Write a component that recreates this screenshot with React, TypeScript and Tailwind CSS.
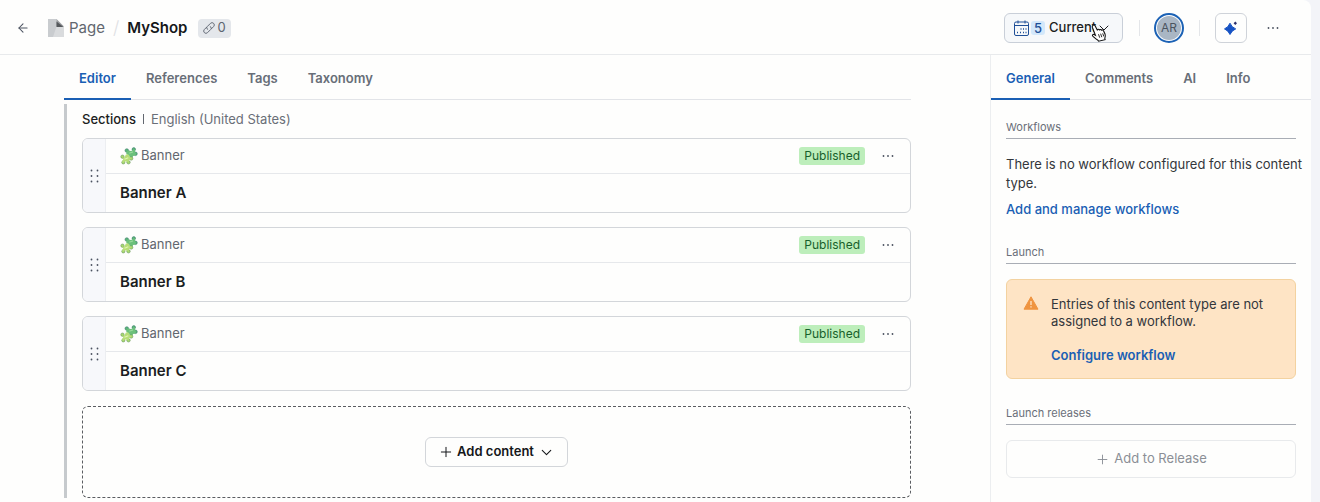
import { ArrowLeft, ChevronDown, Plus } from "lucide-react";

const banners = ["Banner A", "Banner B", "Banner C"];

function PageIcon() {
  return (
    <svg width="17" height="18" viewBox="0 0 17 18" aria-hidden="true">
      <path d="M0 0h8.500v7.500H16V18H0z" fill="#d9dbdd" />
      <path d="M0 0h8.500v7.500L5 18H0z" fill="#c9cccf" />
      <path d="M8.500 0L16 7.500H8.500z" fill="#9a9da0" />
      <path d="M8.500 2.500L15.500 8H8.500z" fill="#55595c" />
    </svg>
  );
}

function LinkIcon() {
  return (
    <svg width="12" height="12" viewBox="0 0 14 14" fill="none" stroke="#5d6571" strokeWidth="1.1" strokeLinecap="round" aria-hidden="true">
      <path d="M5.600 8.600L4.800 8a2 2 0 0 1 .2-2.700L8.700 1.600a2.500 2.500 0 0 1 3.700 3.700L9.800 7.900" />
      <path d="M8.400 5.400l.8.6a2 2 0 0 1-.2 2.700L5.300 12.400a2.500 2.500 0 0 1-3.700-3.700l2.600-2.600" />
    </svg>
  );
}

function CalendarIcon() {
  return (
    <svg width="15" height="16" viewBox="0 0 15 16" fill="none" stroke="#1f4f97" aria-hidden="true">
      <rect x="0.5" y="2" width="14" height="13.500" rx="1.500" />
      <path d="M0.500 5.500h14M4 0.500v3M11 0.500v3" />
      <path d="M6.500 9h1M9 9h1M11.500 9h1M3 12.500h1M6 12.500h1M9 12.500h1M11.500 12.500h1" strokeWidth="1.300" />
    </svg>
  );
}

function SparkIcon() {
  return (
    <svg width="14" height="14" viewBox="0 0 14 14" fill="#1753c4" aria-hidden="true">
      <path d="M6 2.200Q7.600 6.300 11.700 7.900Q7.600 9.500 6 13.500Q4.400 9.500 0.500 7.900Q4.400 6.300 6 2.200z" stroke="#1753c4" strokeWidth="1" strokeLinejoin="round" />
      <path d="M11.300 0.500L13 2.200L11.300 3.900L9.600 2.200z" fill="#2a2f6b" />
    </svg>
  );
}

function MoreIcon() {
  return (
    <svg width="12" height="4" viewBox="0 0 12 4" fill="#4b5260" aria-hidden="true">
      <circle cx="1.500" cy="2" r="0.900" />
      <circle cx="6" cy="2" r="0.900" />
      <circle cx="10.500" cy="2" r="0.900" />
    </svg>
  );
}

function GripIcon() {
  return (
    <svg width="9" height="14" viewBox="0 0 9 14" fill="#4b5260" aria-hidden="true">
      {[1.5, 7, 12.5].map((y) => (
        <g key={y}>
          <circle cx="1.500" cy={y} r="0.900" />
          <circle cx="7.500" cy={y} r="0.900" />
        </g>
      ))}
    </svg>
  );
}

function PuzzleIcon() {
  return (
    <svg width="18" height="18" viewBox="0 0 18 18" aria-hidden="true">
      <g fill="#5cb57a" stroke="#2f7363" strokeWidth="0.500">
        <circle cx="6.800" cy="3.500" r="1.800" />
        <circle cx="13.800" cy="2.300" r="1.700" />
        <circle cx="15.500" cy="6.800" r="1.800" />
      </g>
      <path d="M6.500 4.600l2.600-1.200 1.500.6 2-.4 1.200-1.600 1.500 1.600-.4 1.700 1 1.200-.7 1.900-2 .6-1 1.700-2.500-.8-1.800-2-1.600-1z" fill="#6cc07b" />
      <path d="M9.300 6.300l3.700-1.400" stroke="#98d99a" strokeWidth="1.200" />
      <g fill="#a9d86e" stroke="#5c8d5c" strokeWidth="0.500">
        <circle cx="2.500" cy="9.700" r="1.700" />
        <circle cx="11.200" cy="11.500" r="1.700" />
        <circle cx="8.500" cy="15.300" r="1.700" />
        <circle cx="3.300" cy="15.400" r="1.600" />
      </g>
      <path d="M2.300 10.900l2.400-.7 1-2.400 1.800-.6 1.700.9.200 1.700 2.200 1.100-1.200 1.700-1.500.6-.3 2.200-2.200-.8-1.500-.2-2 1.400-.9-1.700 1.300-1.700z" fill="#b7de78" />
      <path d="M4.500 12.300l3.800-1.500" stroke="#e3f3b3" strokeWidth="1.200" />
    </svg>
  );
}

function WarningIcon() {
  return (
    <svg width="16" height="14" viewBox="0 0 16 14" aria-hidden="true">
      <path d="M8 .8L15 13.200H1z" fill="#ef9440" stroke="#ef9440" strokeLinejoin="round" />
      <path d="M8 5v4M8 10.300v1.300" stroke="#fde5c8" strokeWidth="1.300" />
    </svg>
  );
}

function HandCursor() {
  return (
    <svg className="absolute top-[11px] right-4" width="16" height="18" viewBox="0 0 16 18" aria-hidden="true">
      <path
        d="M2 1.200c.9-.6 1.800-.1 2.200.7l2 4c.5-.9 1.700-.9 2.200 0 .6-.7 1.700-.6 2.100.3.700-.6 1.700-.3 2 .5l1.600 3.600c.5 1.500.2 2.900-.3 4l.3 1.400-6.500 1.500-1-1.200c-2-.9-3.500-2.700-4.800-3.800-.9-.9.1-2.200 1.300-1.700l1.300.8-3-7.800c-.3-.9-.1-1.800.6-2.300z"
        fill="#fff"
        stroke="#111"
        strokeWidth="1.100"
      />
      <path d="M7.500 10.200l1.200 3.500M9.600 9.700l1.200 3.500M11.700 9.300l1.100 3.200" stroke="#111" strokeWidth="0.900" />
    </svg>
  );
}

function Tabs({ items }: { items: string[] }) {
  return (
    <div role="tablist" className="flex h-[45px] border-b border-[#e2e4e8]">
      {items.map((item, i) => (
        <button
          key={item}
          role="tab"
          aria-selected={i === 0}
          className={
            i === 0
              ? "-mb-px border-b-2 border-[#1a5fb4] px-[15px] pt-1 text-[13px] font-semibold text-[#1a5fb4]"
              : "-mb-px border-b-2 border-transparent px-[15px] pt-1 text-[13px] font-semibold text-[#686e78]"
          }
        >
          {item}
        </button>
      ))}
    </div>
  );
}

function SideHeading({ children }: { children: string }) {
  return (
    <h2 className="border-b border-[#a9adb5] pb-[3px] text-[11px] leading-4 text-[#6a6f79]">{children}</h2>
  );
}

function BannerCard({ title }: { title: string }) {
  return (
    <li className="flex h-[75px] overflow-hidden rounded-md border border-[#d3d6da]">
      <div className="flex w-[23px] items-center justify-center border-r border-[#eceef1] bg-[#f7f8fb]">
        <GripIcon />
      </div>
      <div className="flex flex-1 flex-col">
        <div className="flex h-[35px] items-center border-b border-[#e6e8eb] pr-4 pl-[14px]">
          <PuzzleIcon />
          <span className="ml-[3px] flex-1 text-[13px] text-[#62676f]">Banner</span>
          <span className="rounded-[3px] bg-[#bdeebb] px-[5px] text-xs leading-[18px] text-[#17602b]">Published</span>
          <button aria-label={`${title} actions`} className="ml-[17px]">
            <MoreIcon />
          </button>
        </div>
        <h3 className="flex flex-1 items-center pl-[14px] text-[15px] font-semibold text-[#1b1d21]">{title}</h3>
      </div>
    </li>
  );
}

export default function App() {
  return (
    <div className="min-h-screen bg-[#f3f4f8] pr-[9px] font-['Inter',sans-serif]">
      <div className="flex min-h-screen flex-col rounded-tr-lg bg-[#fefefd]">
        <header className="flex h-[55px] items-center border-b border-[#e8eaec] pt-[2px] pr-8 pl-4">
          <button aria-label="Back" className="text-[#4b5260]">
            <ArrowLeft size={14} strokeWidth={1.8} />
          </button>
          <div className="ml-[18px] flex items-center">
            <PageIcon />
            <a href="#" className="ml-1 text-[15px] text-[#62676f]">Page</a>
            <span className="mx-2 text-lg font-light text-[#dfe1e4]">/</span>
            <h1 className="text-[15px] font-semibold text-[#15171a]">MyShop</h1>
            <button aria-label="Linked entries: 0" className="ml-[11px] flex h-[19px] items-center gap-[2px] rounded bg-[#e4e7eb] px-[5px] text-[13px] text-[#5d6571]">
              <LinkIcon />
              0
            </button>
          </div>
          <div className="ml-auto flex items-center">
            <div className="relative">
              <button aria-haspopup="dialog" className="flex h-[30px] w-[119px] items-center rounded-md border border-[#c9cfd8] bg-[#f6f8fa] pl-[9px] text-[13px] font-medium text-[#1b1d21]">
                <CalendarIcon />
                <span className="mr-1 ml-[2px] rounded-[3px] bg-[#d3e8fb] px-[3px] leading-[14px] text-[#1f4f97]">5</span>
                Current
                <ChevronDown size={16} strokeWidth={1.5} />
              </button>
              <HandCursor />
            </div>
            <span className="ml-4 h-4 w-px bg-[#e4e6e9]" />
            <button aria-label="Account AR" className="ml-[14px] flex size-[30px] items-center justify-center rounded-full border-2 border-[#1c62b5] bg-white p-px text-xs text-[#4b545f]">
              <span className="flex size-full items-center justify-center rounded-full bg-[#a9b6c4]">AR</span>
            </button>
            <span className="ml-[15px] h-4 w-px bg-[#e4e6e9]" />
            <button aria-label="Assistant" className="ml-[15px] flex h-[30px] w-8 items-center justify-center rounded-md border border-[#cfd3d9]">
              <SparkIcon />
            </button>
            <button aria-label="More actions" className="ml-5">
              <MoreIcon />
            </button>
          </div>
        </header>

        <div className="flex flex-1">
          <main className="flex-1 pr-[79px] pl-16">
            <Tabs items={["Editor", "References", "Tags", "Taxonomy"]} />
            <section className="mt-1 border-l-[3px] border-[#c6cacd] pl-[15px]">
              <div className="flex items-center pt-[5px] pb-[9px] text-[13px] leading-5">
                <h2 className="font-medium text-[#1b1d21]">Sections</h2>
                <span className="mx-[7px] h-[10px] w-px bg-[#62676f]" />
                <span className="text-[#6a6f78]">English (United States)</span>
              </div>
              <ul className="flex flex-col gap-[14px]">
                {banners.map((b) => (
                  <BannerCard key={b} title={b} />
                ))}
              </ul>
              <div className="mt-[15px] flex h-[92px] items-center justify-center rounded-md border border-dashed border-[#5a5d61]">
                <button className="flex h-[30px] items-center rounded-md border border-[#d3d6da] px-3 text-[13px] font-semibold text-[#15171a]">
                  <Plus size={16} strokeWidth={1.5} className="mr-[3px]" />
                  Add content
                  <ChevronDown size={17} strokeWidth={1.5} className="ml-1" />
                </button>
              </div>
            </section>
          </main>

          <aside className="w-[321px] border-l border-[#eceef0]">
            <Tabs items={["General", "Comments", "AI", "Info"]} />
            <div className="px-[15px] pt-[19px] text-[13px]">
              <SideHeading>Workflows</SideHeading>
              <p className="-mr-3 mt-4 leading-[19px] text-[#33363b]">
                There is no workflow configured for this content type.
              </p>
              <a href="#" className="mt-[7px] block leading-[18px] font-medium text-[#1a5fb4]">Add and manage workflows</a>

              <div className="mt-[26px]">
                <SideHeading>Launch</SideHeading>
              </div>
              <div className="mt-[15px] flex gap-3 rounded-md border border-[#f3d2a0] bg-[#fee4c5] px-4 pt-4 pb-[14px]">
                <WarningIcon />
                <div className="flex-1 leading-[17px] text-[#33363b]">
                  <p>Entries of this content type are not assigned to a workflow.</p>
                  <a href="#" className="mt-[17px] block font-semibold text-[#1a5fb4]">Configure workflow</a>
                </div>
              </div>

              <div className="mt-[26px]">
                <SideHeading>Launch releases</SideHeading>
              </div>
              <button disabled className="mt-[15px] flex h-[38px] w-full items-center justify-center gap-1 rounded-md border border-[#e8eaec] text-[#8b8f96]">
                <Plus size={15} strokeWidth={1.5} />
                Add to Release
              </button>
            </div>
          </aside>
        </div>
      </div>
    </div>
  );
}
